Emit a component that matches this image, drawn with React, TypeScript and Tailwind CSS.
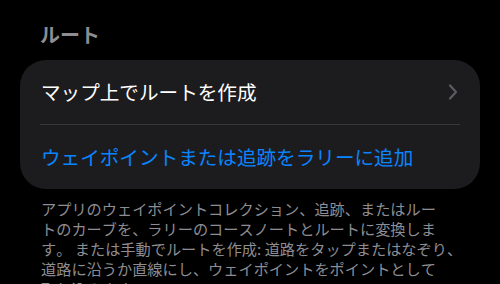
import React from "react";

export default function App() {
  return (
    <div
      className="w-[500px] h-[284px] bg-black overflow-hidden"
      style={{ fontFamily: '"Noto Sans CJK JP", "Noto Sans", sans-serif' }}
    >
      <div className="pt-[21px] pl-[40px] text-[20px] font-semibold leading-[28px] text-[#8d8d93]">
        ルート
      </div>
      <div className="mx-[20px] mt-[11px] rounded-[26px] bg-[#1c1c1e]">
        <div className="flex h-[64px] items-center justify-between pl-[21px] pr-[22px]">
          <span className="text-[19.6px] leading-[26px] text-white [font-kerning:none]">
            マップ上でルートを作成
          </span>
          <svg width="10" height="16" viewBox="0 0 10 16" fill="none">
            <path
              d="M2 1.5 L8 8 L2 14.5"
              stroke="#5b5b60"
              strokeWidth="2.2"
              strokeLinecap="round"
              strokeLinejoin="round"
            />
          </svg>
        </div>
        <div className="mx-[20px] h-px bg-[#38383a]" />
        <div className="flex h-[64px] items-center pl-[21px]">
          <span className="text-[19.6px] leading-[26px] text-[#0a84ff] [font-kerning:none]">
            ウェイポイントまたは追跡をラリーに追加
          </span>
        </div>
      </div>
      <div className="pt-[9px] pl-[41px] whitespace-nowrap text-[15.2px] leading-[20px] text-[#8d8d93] [font-kerning:none]">
        アプリのウェイポイントコレクション、追跡、またはルー
        <br />
        トのカーブを、ラリーのコースノートとルートに変換しま
        <br />
        す。 または手動でルートを作成: 道路をタップまたはなぞり、
        <br />
        道路に沿うか直線にし、ウェイポイントをポイントとして
        <br />
        取り込みます。
      </div>
    </div>
  );
}
